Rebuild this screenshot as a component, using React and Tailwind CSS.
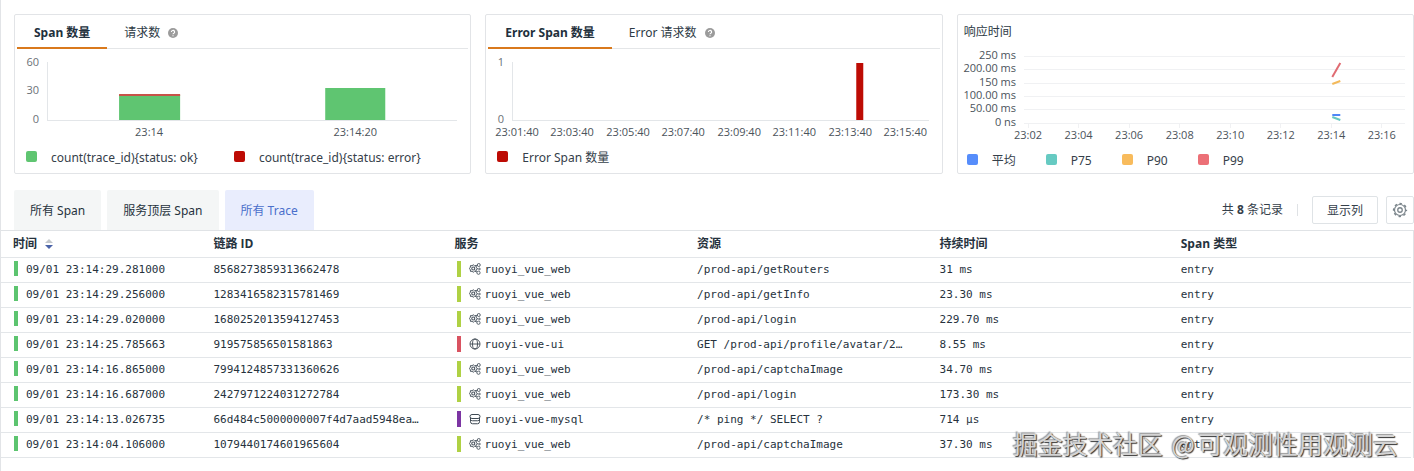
import React, { useState } from "react";

const SANS = "font-['Noto_Sans','Noto_Sans_CJK_SC',sans-serif]";
const NARROW = "font-['Open_Sans','Noto_Sans_CJK_SC',sans-serif]";
const MONO = "font-['DejaVu_Sans_Mono',monospace]";

const CHART_WIDTH = 455;
const pct = (x) => `${(x / CHART_WIDTH) * 100}%`;

function HelpIcon() {
  return (
    <svg viewBox="0 0 16 16" className="size-2.5" aria-hidden="true">
      <circle cx="8" cy="8" r="8" fill="#9b9b9b" />
      <path
        d="M5.4 6.4a2.6 2.4 0 1 1 3.9 2c-.8.5-1.3.9-1.3 1.7M8 11.6v1.6"
        fill="none"
        stroke="#fff"
        strokeWidth="1.8"
      />
    </svg>
  );
}

function GearIcon() {
  return (
    <svg viewBox="0 0 32 32" className="size-4" fill="none" stroke="currentColor" aria-hidden="true">
      <circle cx="16" cy="16" r="13" strokeWidth="2.600" strokeDasharray="5.100 5.100" strokeDashoffset="2.550" />
      <circle cx="16" cy="16" r="11" strokeWidth="2.400" />
      <circle cx="16" cy="16" r="4.500" strokeWidth="2.600" />
    </svg>
  );
}

function WebServiceIcon() {
  return (
    <svg viewBox="0 0 24 24" className="size-3 shrink-0" fill="none" stroke="#4a5560" aria-hidden="true">
      <path
        d="M8.500 3.500l2.400 2 3.100-.3.300 3.100 2 2.700-2 2.700-.3 3.100-3.100-.3-2.400 2-2.400-2-3.100.3-.3-3.100L1 11l1.700-2.700.3-3.100 3.100.3z"
        strokeWidth="2"
      />
      <circle cx="8.500" cy="11" r="3" strokeWidth="2.200" />
      <path d="M13.500 6l3-1.500M15.700 11.500l2.800.5M13 16l3 2.500" strokeWidth="1.800" />
      <circle cx="19.500" cy="4" r="3" strokeWidth="1.800" />
      <circle cx="21" cy="12" r="1.600" strokeWidth="1.800" />
      <circle cx="19" cy="19.500" r="3.200" strokeWidth="1.800" />
    </svg>
  );
}

function GlobeIcon() {
  return (
    <svg viewBox="0 0 24 24" className="size-3 shrink-0" fill="none" stroke="#3f4a54" strokeWidth="1.800" aria-hidden="true">
      <circle cx="12" cy="12" r="10" />
      <ellipse cx="12" cy="12" rx="5" ry="10" />
      <path d="M2 12h20" />
    </svg>
  );
}

function DatabaseIcon() {
  return (
    <svg viewBox="0 0 24 24" className="size-3 shrink-0" fill="none" stroke="#3f4a54" strokeWidth="2" aria-hidden="true">
      <rect x="2" y="3" width="20" height="8" rx="4" />
      <path d="M3 9.500v8a4 4 0 0 0 4 4h10a4 4 0 0 0 4-4v-8M3 13a4 3 0 0 0 4 2.500h10a4 3 0 0 0 4-2.500" />
    </svg>
  );
}

function Panel({ children }) {
  return (
    <section className="flex h-40 min-w-0 flex-col rounded-xs border border-[#e2e4e7] bg-white">
      {children}
    </section>
  );
}

function PanelTabs({ tabs }) {
  const [active, setActive] = useState(0);
  return (
    <div role="tablist" className="mx-0.5 flex h-[34px] shrink-0 border-b border-[#e4e6e8]">
      {tabs.map((tab, i) => (
        <button
          key={tab}
          type="button"
          role="tab"
          aria-selected={i === active}
          onClick={() => setActive(i)}
          className={
            i === active
              ? "flex h-[34px] items-center border-b-2 border-[#d9791c] px-[17px] pt-1 text-xs font-bold text-[#22303c]"
              : "flex h-[34px] items-center gap-2 border-b-2 border-transparent px-[17px] pt-1 text-xs text-[#2d3a45]"
          }
        >
          {tab}
          {i > 0 && <HelpIcon />}
        </button>
      ))}
    </div>
  );
}

function Legend({ items, className }) {
  return (
    <ul className={`flex items-center text-xs text-[#35404a] ${className}`}>
      {items.map((item) => (
        <li key={item.label} className="flex items-start gap-3.5">
          <span className={`mt-px size-[11px] rounded-xs ${item.color}`} />
          {item.label}
        </li>
      ))}
    </ul>
  );
}

function AxisText({ x, y, anchor = "middle", fill = "#4b535b", children }) {
  return (
    <text x={pct(x)} y={y} textAnchor={anchor} fill={fill}>
      {children}
    </text>
  );
}

function BarChart({ left, right, yTicks, xTicks, bars, label }) {
  return (
    <svg className={`h-[94px] w-full shrink-0 text-[11px] ${NARROW}`} role="img" aria-label={label}>
      <g stroke="#e3e6e9" shapeRendering="crispEdges">
        <line x1={pct(left)} x2={pct(left)} y1="13" y2="71" />
        <line x1={pct(left)} x2={pct(right)} y1="71" y2="71" />
      </g>
      {bars.map((b) => (
        <rect key={b.x + b.fill} x={pct(b.x)} y={b.y} width={pct(b.w)} height={b.h} fill={b.fill} />
      ))}
      {yTicks.map((t) => (
        <AxisText key={t.text} x={left - 8} y={t.y} anchor="end" fill="#6b7178">
          {t.text}
        </AxisText>
      ))}
      {xTicks.map((t) => (
        <AxisText key={t.text} x={t.x} y={87}>
          {t.text}
        </AxisText>
      ))}
    </svg>
  );
}

const latencyTicks = [
  { text: "250 ms", y: 13 },
  { text: "200.00 ms", y: 26 },
  { text: "150 ms", y: 40 },
  { text: "100.00 ms", y: 53 },
  { text: "50.00 ms", y: 66 },
  { text: "0 ns", y: 80 },
];
const latencyTimes = ["23:02", "23:04", "23:06", "23:08", "23:10", "23:12", "23:14", "23:16"];
const latencySeries = [
  { stroke: "#e06b72", from: [374, 34], to: [382, 20] },
  { stroke: "#f3b95a", from: [374, 41], to: [382, 38] },
  { stroke: "#4f86f7", from: [374, 72], to: [382, 72] },
  { stroke: "#66c7c0", from: [374, 74], to: [382, 77] },
];

function LatencyChart() {
  return (
    <svg className={`h-[100px] w-full shrink-0 text-[11px] ${NARROW}`} role="img" aria-label="响应时间">
      <g stroke="#f0f1f3" shapeRendering="crispEdges">
        {latencyTicks.map((t) => (
          <line key={t.text} x1={pct(66)} x2={pct(447)} y1={t.y} y2={t.y} />
        ))}
        {latencyTimes.map((t, i) => (
          <line key={t} x1={pct(70 + i * 50.5)} x2={pct(70 + i * 50.5)} y1="80" y2="85" />
        ))}
      </g>
      {latencySeries.map((s) => (
        <line
          key={s.stroke}
          x1={pct(s.from[0])}
          y1={s.from[1]}
          x2={pct(s.to[0])}
          y2={s.to[1]}
          stroke={s.stroke}
          strokeWidth="2"
        />
      ))}
      {latencyTicks.map((t) => (
        <AxisText key={t.text} x={58} y={t.y + 3} anchor="end">
          {t.text}
        </AxisText>
      ))}
      {latencyTimes.map((t, i) => (
        <AxisText key={t} x={70 + i * 50.5} y={96}>
          {t}
        </AxisText>
      ))}
    </svg>
  );
}

const services = {
  ruoyi_vue_web: { bar: "bg-[#afd144]", Icon: WebServiceIcon },
  "ruoyi-vue-ui": { bar: "bg-[#d95361]", Icon: GlobeIcon },
  "ruoyi-vue-mysql": { bar: "bg-[#7c35a3]", Icon: DatabaseIcon },
};

const rows = [
  ["09/01 23:14:29.281000", "8568273859313662478", "ruoyi_vue_web", "/prod-api/getRouters", "31 ms", "entry"],
  ["09/01 23:14:29.256000", "1283416582315781469", "ruoyi_vue_web", "/prod-api/getInfo", "23.30 ms", "entry"],
  ["09/01 23:14:29.020000", "1680252013594127453", "ruoyi_vue_web", "/prod-api/login", "229.70 ms", "entry"],
  ["09/01 23:14:25.785663", "919575856501581863", "ruoyi-vue-ui", "GET /prod-api/profile/avatar/2…", "8.55 ms", "entry"],
  ["09/01 23:14:16.865000", "7994124857331360626", "ruoyi_vue_web", "/prod-api/captchaImage", "34.70 ms", "entry"],
  ["09/01 23:14:16.687000", "2427971224031272784", "ruoyi_vue_web", "/prod-api/login", "173.30 ms", "entry"],
  ["09/01 23:14:13.026735", "66d484c5000000007f4d7aad5948ea…", "ruoyi-vue-mysql", "/* ping */ SELECT ?", "714 μs", "entry"],
  ["09/01 23:14:04.106000", "1079440174601965604", "ruoyi_vue_web", "/prod-api/captchaImage", "37.30 ms", "entry"],
];

const headings = ["链路 ID", "服务", "资源", "持续时间", "Span 类型"];

function TraceTable() {
  return (
    <div className="border-t border-r border-[#e0e3e6] pr-0.5">
      <table className="w-full table-fixed border-collapse text-left">
        <colgroup>
          <col className="w-[14.5%]" />
          <col className="w-[17.1%]" />
          <col className="w-[17.2%]" />
          <col className="w-[17.2%]" />
          <col className="w-[17.1%]" />
          <col />
        </colgroup>
        <thead>
          <tr className={`h-[26px] border-b border-[#e3e6e9] text-xs text-[#26323d] ${NARROW}`}>
            <th scope="col" aria-sort="descending" className="px-2 py-0 pl-3 font-bold">
              <button type="button" className="flex items-center gap-2 font-bold">
                时间
                <svg viewBox="0 0 8 10" className="h-2.5 w-2" aria-hidden="true">
                  <path d="M4 0l4 4H0z" fill="#c3c7cc" />
                  <path d="M4 10l4-4H0z" fill="#4a63a8" />
                </svg>
              </button>
            </th>
            {headings.map((h) => (
              <th key={h} scope="col" className="px-2 py-0 font-bold">
                {h}
              </th>
            ))}
          </tr>
        </thead>
        <tbody className={`text-[11px] text-[#26323d] ${MONO}`}>
          {rows.map(([time, id, service, resource, duration, type]) => {
            const { bar, Icon } = services[service];
            return (
              <tr key={id} className="h-[25px] border-b border-[#e3e6e9]">
                <td className="pt-0 pb-0.5 pl-[13px]">
                  <div className="flex items-center gap-2">
                    <span className="h-[15px] w-1 bg-[#5cc46f]" />
                    <span className="truncate pt-1">{time}</span>
                  </div>
                </td>
                <td className="truncate px-2 pt-0.5 pb-0">{id}</td>
                <td className="px-2 pt-0 pb-0.5">
                  <div className="flex items-center">
                    <span className={`mr-2 ml-0.5 h-4 w-1 ${bar}`} />
                    <Icon />
                    <span className="truncate pt-1 pl-1">{service}</span>
                  </div>
                </td>
                <td className="truncate px-2 pt-0.5 pb-0">{resource}</td>
                <td className="truncate px-2 pt-0.5 pb-0">{duration}</td>
                <td className="truncate px-2 pt-0.5 pb-0">{type}</td>
              </tr>
            );
          })}
        </tbody>
      </table>
    </div>
  );
}

const views = ["所有 Span", "服务顶层 Span", "所有 Trace"];

export default function App() {
  const [view, setView] = useState(2);
  return (
    <main className={`relative min-h-screen border-l border-[#e2e4e7] bg-white ${SANS}`}>
      <div className="grid grid-cols-3 gap-3.5 pt-3.5 pl-[13px]">
        <Panel>
          <PanelTabs tabs={["Span 数量", "请求数"]} />
          <BarChart
            label="Span 数量"
            left={32}
            right={442}
            yTicks={[
              { text: "60", y: 17 },
              { text: "30", y: 45 },
              { text: "0", y: 74 },
            ]}
            xTicks={[
              { text: "23:14", x: 134 },
              { text: "23:14:20", x: 340 },
            ]}
            bars={[
              { x: 104, y: 46, w: 61, h: 25, fill: "#5fc571" },
              { x: 104, y: 45, w: 61, h: 2, fill: "#c65348" },
              { x: 310, y: 39, w: 60, h: 32, fill: "#5fc571" },
            ]}
          />
          <Legend
            className="h-[30px] gap-9 px-[11px]"
            items={[
              { label: "count(trace_id){status: ok}", color: "bg-[#5fc571]" },
              { label: "count(trace_id){status: error}", color: "bg-[#bd0b04]" },
            ]}
          />
        </Panel>

        <Panel>
          <PanelTabs tabs={["Error Span 数量", "Error 请求数"]} />
          <BarChart
            label="Error Span 数量"
            left={26}
            right={443}
            yTicks={[
              { text: "1", y: 17 },
              { text: "0", y: 74 },
            ]}
            xTicks={[
              { text: "23:01:40", x: 31 },
              { text: "23:03:40", x: 86 },
              { text: "23:05:40", x: 142 },
              { text: "23:07:40", x: 197 },
              { text: "23:09:40", x: 253 },
              { text: "23:11:40", x: 308 },
              { text: "23:13:40", x: 364 },
              { text: "23:15:40", x: 419 },
            ]}
            bars={[{ x: 370, y: 14, w: 7, h: 57, fill: "#bd0b04" }]}
          />
          <Legend className="h-[30px] px-[11px]" items={[{ label: "Error Span 数量", color: "bg-[#bd0b04]" }]} />
        </Panel>

        <Panel>
          <h2 className="h-7 shrink-0 px-1.5 pt-[9px] text-xs leading-4 text-[#2d3a45]">响应时间</h2>
          <LatencyChart />
          <Legend
            className="h-[30px] gap-[30px] px-[9px] pt-1.5"
            items={[
              { label: "平均", color: "bg-[#568dfb]" },
              { label: "P75", color: "bg-[#66cac2]" },
              { label: "P90", color: "bg-[#f8bb5c]" },
              { label: "P99", color: "bg-[#ec7077]" },
            ]}
          />
        </Panel>
      </div>

      <div className="flex items-end justify-between pt-4 pl-[13px]">
        <div role="tablist" className="flex gap-1.5">
          {views.map((name, i) => (
            <button
              key={name}
              type="button"
              role="tab"
              aria-selected={i === view}
              onClick={() => setView(i)}
              className={
                i === view
                  ? "h-10 rounded-t-xs bg-[#e9edfd] px-4 pt-0.5 text-xs text-[#4a6fcb]"
                  : "h-10 rounded-t-xs bg-[#f4f6f6] px-4 pt-0.5 text-xs text-[#26323d]"
              }
            >
              {name}
            </button>
          ))}
        </div>
        <div className="flex items-center pb-1.5 text-xs text-[#35404a]">
          <p>
            共 <b>8</b> 条记录
          </p>
          <span className="mx-3.5 h-3 w-px bg-[#dfe2e5]" />
          <button type="button" className="h-7 rounded-xs border border-[#dfe3e6] px-3.5 pt-0.5">
            显示列
          </button>
          <button
            type="button"
            aria-label="设置"
            className="ml-2 flex size-7 items-center justify-center rounded-xs border border-[#dfe3e6] text-[#7b858b]"
          >
            <GearIcon />
          </button>
        </div>
      </div>

      <TraceTable />

      <p className="pointer-events-none absolute right-4 bottom-3 font-['Noto_Sans_CJK_SC',sans-serif] text-[25px] leading-8 whitespace-nowrap text-[#d4d4d4] [text-shadow:1px_1px_1px_#333,-1px_-1px_1px_#999]">
        掘金技术社区 <span className="px-[3px]">@</span>可观测性用观测云
      </p>
    </main>
  );
}
